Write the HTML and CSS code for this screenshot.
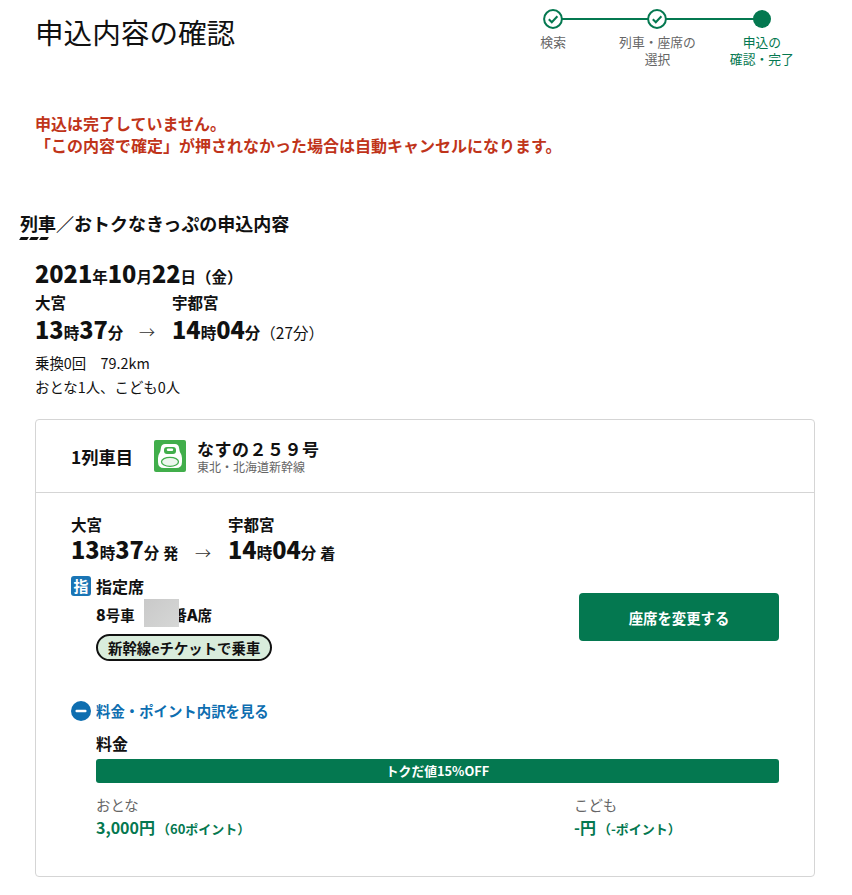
FILE: index.html
```html
<!DOCTYPE html>
<html lang="ja">
<head>
<meta charset="utf-8">
<title>申込内容の確認</title>
<link rel="stylesheet" href="styles.css">
</head>
<body>
<header class="top">
  <h1 class="title">申込内容の確認</h1>
  <ol class="steps">
    <li class="step done">
      <span class="dot"><svg width="20" height="20" viewBox="0 0 20 20"><circle cx="10" cy="10" r="8.900" fill="#fff" stroke="#047850" stroke-width="2"/><path d="M5.800 10.200l3 3 5.600-6" fill="none" stroke="#047850" stroke-width="2"/></svg></span>
      <span class="step-label">検索</span>
    </li>
    <li class="step done">
      <span class="dot"><svg width="20" height="20" viewBox="0 0 20 20"><circle cx="10" cy="10" r="8.900" fill="#fff" stroke="#047850" stroke-width="2"/><path d="M5.800 10.200l3 3 5.600-6" fill="none" stroke="#047850" stroke-width="2"/></svg></span>
      <span class="step-label">列車・座席の<br>選択</span>
    </li>
    <li class="step current">
      <span class="dot"><svg width="20" height="20" viewBox="0 0 20 20"><circle cx="10" cy="10" r="9" fill="#047850"/></svg></span>
      <span class="step-label">申込の<br>確認・完了</span>
    </li>
  </ol>
</header>

<p class="warning">申込は完了していません。<br>「この内容で確定」が押されなかった場合は自動キャンセルになります。</p>

<h2 class="section-title">列車／おトクなきっぷの申込内容</h2>
<div class="dashes"><i></i><i></i><i></i></div>

<section class="summary">
  <div class="date"><b>2021</b>年<b>10</b>月<b>22</b>日<span class="dow">（金）</span></div>
  <div class="route">
    <div class="stop">
      <div class="station">大宮</div>
      <div class="time"><b>13</b>時<b>37</b>分</div>
    </div>
    <div class="arrow">→</div>
    <div class="stop">
      <div class="station">宇都宮</div>
      <div class="time"><b>14</b>時<b>04</b>分<span class="duration">（27分）</span></div>
    </div>
  </div>
  <p class="meta">乗換0回　79.2km</p>
  <p class="meta">おとな1人、こども0人</p>
</section>

<section class="card">
  <div class="card-head">
    <div class="train-no">1列車目</div>
    <svg class="train-icon" width="32" height="32" viewBox="0 0 32 32">
      <rect width="32" height="32" rx="2" fill="#41ae4b"/>
      <path d="M11 4h10q3.500 0 4 3.500l.500 3q.300 1.500 1 2.500 1.500 2.200 1.500 5v4q0 6-6 6H10q-6 0-6-6v-4q0-2.800 1.500-5 .700-1 1-2.500l.500-3Q7.500 4 11 4z" fill="#fff"/>
      <rect x="10" y="7" width="12" height="7" rx="3" fill="#41ae4b"/>
      <rect x="12.800" y="8.500" width="6.400" height="2.600" rx="1.300" fill="#fff"/>
      <ellipse cx="16" cy="21.800" rx="8.500" ry="4.500" fill="#eef7ee" stroke="#41ae4b" stroke-width="1.300"/>
    </svg>
    <div class="train-text">
      <div class="train-name">なすの２５９号</div>
      <div class="train-line">東北・北海道新幹線</div>
    </div>
  </div>
  <div class="card-body">
    <div class="detail-row">
      <div class="detail-left">
        <div class="route route-card">
          <div class="stop">
            <div class="station">大宮</div>
            <div class="time"><b>13</b>時<b>37</b>分<span class="suffix">発</span></div>
          </div>
          <div class="arrow">→</div>
          <div class="stop">
            <div class="station">宇都宮</div>
            <div class="time"><b>14</b>時<b>04</b>分<span class="suffix">着</span></div>
          </div>
        </div>
        <div class="seat-type"><span class="seat-badge">指</span>指定席</div>
        <div class="seat-no"><b>8</b>号車<span class="mask"></span>番<b>A</b>席</div>
        <div class="pill">新幹線eチケットで乗車</div>
      </div>
      <button class="change-btn" type="button">座席を変更する</button>
    </div>
    <div class="toggle">
      <svg width="20" height="20" viewBox="0 0 20 20"><circle cx="10" cy="10" r="10" fill="#0e6eb0"/><rect x="4.500" y="8.700" width="11" height="2.600" rx="1" fill="#fff"/></svg>
      料金・ポイント内訳を見る
    </div>
    <div class="fare">
      <div class="fare-title">料金</div>
      <div class="fare-bar">トクだ値15%OFF</div>
      <div class="fare-cols">
        <div class="fare-col">
          <div class="fare-label">おとな</div>
          <div class="fare-price">3,000円<span class="points">（60ポイント）</span></div>
        </div>
        <div class="fare-col">
          <div class="fare-label">こども</div>
          <div class="fare-price">-円<span class="points">（-ポイント）</span></div>
        </div>
      </div>
    </div>
  </div>
</section>
</body>
</html>
```

FILE: styles.css
```css
* { box-sizing: border-box; }
html, body { margin: 0; padding: 0; }
body {
  width: 852px;
  height: 895px;
  overflow: hidden;
  background: #fff;
  color: #111;
  font-family: "Noto Sans CJK JP", "Noto Sans", sans-serif;
  font-size: 14.4px;
}
.top {
  display: flex;
  justify-content: space-between;
  align-items: flex-start;
  padding: 9px 38px 0 35px;
  height: 112px;
}
.title {
  margin: 0;
  font-size: 28.600px;
  line-height: 46px;
  font-weight: 400;
}
.steps {
  list-style: none;
  margin: 0;
  padding: 0;
  display: flex;
  width: 313px;
}
.step {
  position: relative;
  flex: 1 1 0;
  display: flex;
  flex-direction: column;
  align-items: center;
  text-align: center;
  font-size: 12.800px;
  line-height: 17px;
  color: #666;
}
.step + .step::before {
  content: "";
  position: absolute;
  left: -50%;
  right: 50%;
  top: 9px;
  height: 2px;
  background: #047850;
}
.dot { position: relative; z-index: 1; height: 20px; display: block; }
.dot svg { display: block; }
.step-label { margin-top: 4px; }
.current { color: #047850; }
.warning {
  margin: 0;
  padding-left: 35px;
  color: #c0341a;
  font-size: 16px;
  font-weight: 700;
  line-height: 22px;
}
.section-title {
  margin: 55px 0 0;
  padding-left: 20px;
  font-size: 18px;
  line-height: 24px;
  font-weight: 700;
}
.dashes {
  display: flex;
  gap: 2px;
  margin: 2px 0 0 20px;
}
.dashes i {
  display: block;
  width: 8px;
  height: 3px;
  background: #111;
  transform: skewX(-30deg);
}
.summary { padding: 18px 0 0 35px; }
.date { font-size: 15.500px; font-weight: 700; line-height: 30px; }
.date b { font-size: 23.500px; }
.route { display: flex; }
.station { font-size: 15.500px; font-weight: 700; line-height: 24px; }
.summary .station { margin-top: -1px; }
.time { font-size: 15.500px; font-weight: 700; line-height: 30px; white-space: nowrap; }
.time b { font-size: 23.500px; }
.arrow { width: 34px; padding: 25px 0 0 1px; font-size: 16px; line-height: 30px; font-weight: 300; color: #333; white-space: nowrap; }
.summary .stop:first-child { width: 103px; }
.duration { font-weight: 400; }
.meta { margin: 0; line-height: 24px; }
.summary .route { margin-bottom: 4px; }
.card {
  margin: 20px 37px 0 35px;
  border: 1px solid #d5d5d5;
  border-radius: 4px;
  height: 458px;
}
.card-head {
  display: flex;
  align-items: center;
  height: 73px;
  padding-left: 35px;
  border-bottom: 1px solid #d5d5d5;
}
.train-no { width: 83px; font-size: 17.300px; font-weight: 700; }
.train-icon { margin-right: 11px; }
.train-name { font-size: 17px; font-weight: 700; line-height: 21px; letter-spacing: 0.500px; }
.train-line { font-size: 12px; line-height: 15px; color: #666; }
.card-body { padding: 19px 35px 0; }
.detail-row { display: flex; justify-content: space-between; align-items: flex-start; }
.route-card .stop:first-child { width: 123px; }
.route-card .time { line-height: 28px; margin-top: -1px; }
.route-card .arrow { padding-top: 25px; }
.suffix { margin-left: 4px; font-size: 15px; }
.seat-type { display: flex; align-items: center; font-size: 16px; font-weight: 700; line-height: 24px; margin-top: 7px; }
.seat-badge {
  width: 20px; height: 20px; margin-right: 5px;
  border-radius: 3px;
  background: #1a75b5; color: #fff;
  font-size: 15px; line-height: 20px; text-align: center;
}
.seat-no { margin: 5px 0 0 25px; font-size: 14.400px; font-weight: 700; line-height: 22px; white-space: nowrap; }
.seat-no b { font-size: 16px; }
.mask {
  display: inline-block;
  width: 35px; height: 28px;
  margin: -6px -6px -6px 9px;
  background: linear-gradient(135deg, #c9c9c9, #d6d7d6);
  vertical-align: baseline;
  position: relative;
  z-index: 1;
}
.pill {
  display: inline-block;
  margin: 8px 0 0 25px;
  padding: 0 10px;
  border: 2px solid #111;
  border-radius: 14px;
  background: #d9ecdc;
  font-size: 14.400px;
  font-weight: 700;
  line-height: 23px;
}
.change-btn {
  margin-top: 81px;
  width: 200px; height: 48px;
  border: 0; border-radius: 4px;
  background: #047850; color: #fff;
  font: 700 14.400px "Noto Sans CJK JP", sans-serif;
}
.toggle {
  display: flex; align-items: center; gap: 5px;
  margin-top: 40px;
  color: #0e6eb0;
  font-size: 14.400px; font-weight: 700; line-height: 20px;
}
.fare { margin-left: 25px; }
.fare-title { margin-top: 10px; font-size: 16px; font-weight: 700; line-height: 24px; }
.fare-bar {
  height: 24px; margin-top: 4px;
  border-radius: 3px;
  background: #047850; color: #fff;
  font-size: 12.800px; font-weight: 700; line-height: 24px; text-align: center;
}
.fare-cols { display: flex; margin-top: 10px; }
.fare-col:first-child { width: 478px; }
.fare-label { line-height: 24px; color: #666; }
.fare-price { margin-top: -2px; color: #047850; font-size: 16px; font-weight: 700; line-height: 24px; }
.points { font-size: 13px; margin-left: 2px; }
```
